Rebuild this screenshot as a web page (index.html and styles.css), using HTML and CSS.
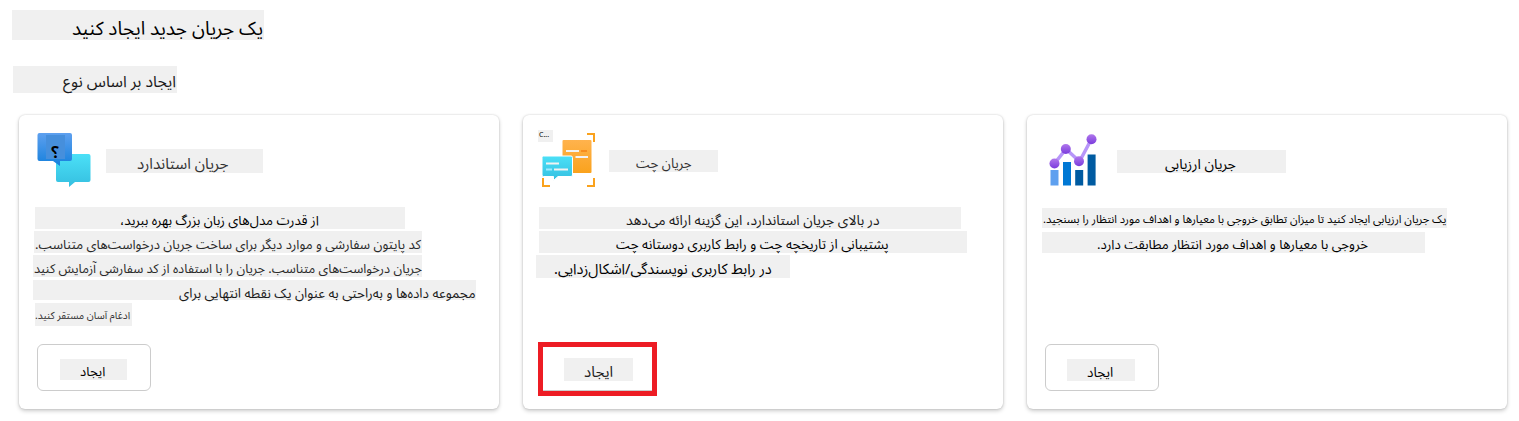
FILE: index.html
```html
<!DOCTYPE html>
<html lang="fa">
<head>
<meta charset="utf-8">
<title>یک جریان جدید ایجاد کنید</title>
<link rel="stylesheet" href="styles.css">
</head>
<body>
<main class="page">
  <h1 class="strip title"><span dir="rtl">یک جریان جدید ایجاد کنید</span></h1>
  <h2 class="strip subtitle"><span dir="rtl">ایجاد بر اساس نوع</span></h2>
  <div class="cards">
    <section class="card">
      <header class="head">
        <svg class="icon" width="60" height="60" viewBox="0 0 60 60">
          <defs>
            <linearGradient id="blue" x2="0" y2="1"><stop offset="0" stop-color="#5ea0ef"/><stop offset="1" stop-color="#1580dc"/></linearGradient>
            <linearGradient id="cyan" x2="0" y2="1"><stop offset="0" stop-color="#4be0f7"/><stop offset="1" stop-color="#35bfe0"/></linearGradient>
          </defs>
          <path fill="url(#cyan)" d="M21 22H51.500a2 2 0 0 1 2 2V48a2 2 0 0 1-2 2H38L32 55V50H21a2 2 0 0 1-2-2V24a2 2 0 0 1 2-2z"/>
          <path fill="url(#blue)" d="M2.500 1H33a2 2 0 0 1 2 2V27a2 2 0 0 1-2 2H23V34L16 29H2.500a2 2 0 0 1-2-2V3a2 2 0 0 1 2-2z"/>
          <rect x="9" y="3" width="19" height="24" fill="#468fdc"/>
          <text class="question" x="18" y="26" text-anchor="middle">؟</text>
        </svg>
        <h3 class="strip h-standard"><span dir="rtl">جریان استاندارد</span></h3>
      </header>
      <div class="lines">
        <p class="strip a1"><span dir="rtl">از قدرت مدل‌های زبان بزرگ بهره ببرید،</span></p>
        <p class="strip a2"><span dir="rtl">کد پایتون سفارشی و موارد دیگر برای ساخت جریان درخواست‌های متناسب.</span></p>
        <p class="strip a3"><span dir="rtl">جریان درخواست‌های متناسب. جریان را با استفاده از کد سفارشی آزمایش کنید</span></p>
        <p class="strip a4"><span dir="rtl">مجموعه داده‌ها و به‌راحتی به عنوان یک نقطه انتهایی برای</span></p>
        <p class="strip a5"><span dir="rtl">ادغام آسان مستقر کنید.</span></p>
      </div>
      <button class="create"><span class="strip c1"><span dir="rtl">ایجاد</span></span></button>
    </section>
    <section class="card">
      <header class="head">
        <svg class="icon" width="60" height="60" viewBox="0 0 60 60">
          <defs>
            <linearGradient id="orange" x2="0" y2="1"><stop offset="0" stop-color="#ffb34d"/><stop offset="1" stop-color="#faa21d"/></linearGradient>
          </defs>
          <path fill="none" stroke="#faa21d" stroke-width="2" d="M46 2H53V10M2 46V54H9M46 54H53V46"/>
          <rect x="21.500" y="8" width="29" height="33" rx="1" fill="url(#orange)"/>
          <path fill="none" stroke="#f2f2f2" stroke-width="2" d="M25 19H38M34.500 25H47"/>
          <path stroke="#f78d1e" stroke-width="2" d="M40 19H46"/>
          <path fill="url(#cyan)" stroke="#fff" d="M2.500 24H30a1.500 1.500 0 0 1 1.500 1.500V43a1.500 1.500 0 0 1-1.500 1.500H17L12.500 48.500V44.500H2.500A1.500 1.500 0 0 1 1 43V25.500A1.500 1.500 0 0 1 2.500 24z"/>
          <path stroke="#f2f2f2" stroke-width="2" d="M5 31.500H18M13 37.500H27"/>
          <path stroke="#9cebff" stroke-width="2" d="M5 37.500H11"/>
          <rect x="-3" y="-2" width="15" height="12" fill="#f0f0f0"/>
          <text class="mini" x="-2" y="5">C...</text>
        </svg>
        <h3 class="strip h-chat"><span dir="rtl">جریان چت</span></h3>
      </header>
      <div class="lines">
        <p class="strip b1"><span dir="rtl">در بالای جریان استاندارد، این گزینه ارائه می‌دهد</span></p>
        <p class="strip b2"><span dir="rtl">پشتیبانی از تاریخچه چت و رابط کاربری دوستانه چت</span></p>
        <p class="strip b3"><span dir="rtl">در رابط کاربری نویسندگی/اشکال‌زدایی.</span></p>
      </div>
      <button class="create marked"><span class="strip c2"><span dir="rtl">ایجاد</span></span></button>
    </section>
    <section class="card">
      <header class="head">
        <svg class="icon" width="60" height="60" viewBox="0 0 60 60">
          <defs>
            <linearGradient id="violet" x2="0" y2="1"><stop offset="0" stop-color="#b077ec"/><stop offset="1" stop-color="#7a3bdc"/></linearGradient>
          </defs>
          <rect x="5.500" y="38" width="8" height="15.500" fill="#5ea0ef"/>
          <rect x="18" y="30" width="8" height="23.500" fill="#0078d4"/>
          <rect x="30.200" y="38" width="8" height="15.500" fill="#005ba1"/>
          <rect x="42.600" y="22.500" width="8" height="31" fill="#005ba1"/>
          <path fill="none" stroke="#b796f9" stroke-width="3.500" d="M9.500 31.500L21 17L34.500 29.500L46.500 7"/>
          <g fill="url(#violet)"><circle cx="9.500" cy="31.500" r="5"/><circle cx="20.800" cy="17" r="5"/><circle cx="34" cy="29.300" r="5"/><circle cx="46.500" cy="7.300" r="5"/></g>
        </svg>
        <h3 class="strip h-eval"><span dir="rtl">جریان ارزیابی</span></h3>
      </header>
      <div class="lines">
        <p class="strip d1"><span dir="rtl">یک جریان ارزیابی ایجاد کنید تا میزان تطابق خروجی با معیارها و اهداف مورد انتظار را بسنجید.</span></p>
        <p class="strip d2"><span dir="rtl">خروجی با معیارها و اهداف مورد انتظار مطابقت دارد.</span></p>
      </div>
      <button class="create"><span class="strip c3"><span dir="rtl">ایجاد</span></span></button>
    </section>
  </div>
</main>
</body>
</html>
```
FILE: styles.css
```css
* { box-sizing: border-box; margin: 0; padding: 0; }
body { background: #fff; color: #000; font-family: "Noto Sans", "Noto Sans Arabic", "Open Sans", sans-serif; overflow: hidden; }
.page { height: 421px; padding: 10px 12px; }
.strip { display: flex; background: #f0f0f0; white-space: nowrap; font-size: 13px; font-weight: 400; line-height: 25px; width: var(--w); height: var(--h); padding-left: var(--l); }
.strip > span { flex: none; }
.title { --w: 252px; --h: 30px; --l: 60px; font-size: 18.95px; line-height: 37px; }
.subtitle { --w: 164px; --h: 27px; --l: 50px; margin: 26px 0 0 1px; font-size: 15.8px; line-height: 31px; color: #1a1a1a; }
.cards { display: flex; gap: 24px; margin: 22px 0 0 7px; }
.card { width: 480px; height: 294px; flex: none; padding: 17px 18px; border-radius: 6px; box-shadow: 0 0 2px rgba(0,0,0,.18), 0 2px 4px rgba(0,0,0,.2); }
.head { display: flex; height: 75px; }
.icon { flex: none; overflow: visible; }
.question { font-size: 16px; font-weight: 600; }
.mini { font-size: 7px; }
.h-standard { --w: 157px; --h: 24px; --l: 31px; margin: 17px 0 0 9px; font-size: 15.2px; line-height: 29px; color: #333; }
.h-chat { --w: 109px; --h: 22px; --l: 27px; margin: 18px 0 0 8px; font-size: 13.3px; line-height: 26px; color: #333; }
.h-eval { --w: 169px; --h: 23px; --l: 48px; margin: 18px 0 0 12px; font-size: 14.1px; line-height: 27px; }
.lines { display: flow-root; height: 137px; }
.a1 { --w: 370px; --h: 22px; --l: 85px; margin-left: -2px; font-size: 13.25px; line-height: 27px; }
.a2 { --w: 388px; --h: 22px; --l: 1px; margin: 2px 0 0 -3px; font-size: 13.1px; line-height: 27px; color: #2a2a2a; }
.a3 { --w: 389px; --h: 22px; --l: 1px; margin: 2px 0 0 -4px; font-size: 12.77px; line-height: 27px; color: #2a2a2a; }
.a4 { --w: 443px; --h: 20px; --l: 146px; margin: 3px 0 0 -4px; font-size: 13.45px; line-height: 27px; color: #1a1a1a; }
.a5 { --w: 97px; --h: 23px; --l: 0; margin: 3px 0 0 -2px; font-size: 10.2px; line-height: 24px; color: #333; }
.b1 { --w: 422px; --h: 22px; --l: 87px; margin-left: -2px; font-size: 13.9px; color: #1a1a1a; }
.b2 { --w: 428px; --h: 22px; --l: 77px; margin: 2px 0 0 -2px; font-size: 13.45px; line-height: 27px; }
.b3 { --w: 254px; --h: 23px; --l: 18px; margin: 2px 0 0 -5px; font-size: 14.6px; line-height: 27px; }
.d1 { --w: 405px; --h: 20px; --l: 1px; margin: 1px 0 0 -3px; font-size: 11.18px; line-height: 22px; }
.d2 { --w: 383px; --h: 21px; --l: 55px; margin: 4px 0 0 -3px; font-size: 13.2px; }
.create { display: flex; width: 114px; height: 47px; padding: 14px 22px; border: 1px solid #ccc; border-radius: 6px; background: #fff; font-family: inherit; color: inherit; }
.create .strip { flex: none; }
.marked { width: 119px; height: 54px; margin: -2px 0 0 -3px; padding: 11px 21px; border: 5px solid #ed1c24; border-radius: 0; box-shadow: inset 0 -1px #ccc; }
.c1 { --w: 67px; --h: 21px; --l: 20px; }
.c2 { --w: 69px; --h: 23px; --l: 20px; font-size: 15px; line-height: 27px; color: #222; }
.c3 { --w: 68px; --h: 22px; --l: 20px; margin-left: -1px; font-size: 13.5px; line-height: 27px; }
```
